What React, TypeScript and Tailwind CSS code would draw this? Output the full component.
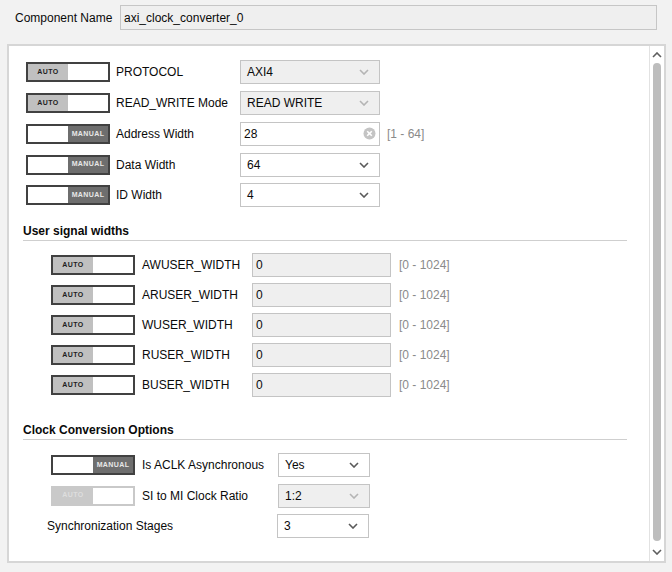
import React from 'react'

type Mode = 'auto' | 'manual' | 'disabled'

function Toggle({ mode }: { mode: Mode }) {
  if (mode === 'manual') {
    return (
      <div className="flex h-[20px] w-[84px] shrink-0 border-2 border-[#414141] bg-white">
        <div className="flex-1 bg-white" />
        <div className="flex w-[40px] items-center justify-center bg-[#6e6e6e] text-[7px] font-bold tracking-[0.4px] text-[#e8e8e8]">
          MANUAL
        </div>
      </div>
    )
  }
  const disabled = mode === 'disabled'
  return (
    <div
      className={
        disabled
          ? 'flex h-[20px] w-[84px] shrink-0 border-2 border-[#c9c9c9] bg-white'
          : 'flex h-[20px] w-[84px] shrink-0 border-2 border-[#414141] bg-white'
      }
    >
      <div
        className={
          disabled
            ? 'flex w-[40px] items-center justify-center bg-[#c9c9c9] text-[7px] font-bold tracking-[0.4px] text-[#dedede]'
            : 'flex w-[40px] items-center justify-center bg-[#c0c0c0] text-[7px] font-bold tracking-[0.4px] text-[#1e1e1e]'
        }
      >
        AUTO
      </div>
      <div className="flex-1 bg-white" />
    </div>
  )
}

function Chevron({ disabled }: { disabled?: boolean }) {
  return (
    <svg width="10" height="6" viewBox="0 0 10 6" className="shrink-0">
      <path d="M1 1 L5 5 L9 1" fill="none" stroke={disabled ? '#b4b4b4' : '#5a5a5a'} strokeWidth="1.6" />
    </svg>
  )
}

function Select({ value, width, disabled }: { value: string; width: string; disabled?: boolean }) {
  return (
    <div
      className={
        (disabled ? 'bg-[#efefef] ' : 'bg-white ') +
        width +
        ' flex h-[24px] shrink-0 items-center justify-between border border-[#c4c4c4] pl-[6px] pr-[10px]'
      }
    >
      <span>{value}</span>
      <Chevron disabled={disabled} />
    </div>
  )
}

function Range({ text }: { text: string }) {
  return <span className="text-[#8a8a8a]">{text}</span>
}

const userRows = ['AWUSER_WIDTH', 'ARUSER_WIDTH', 'WUSER_WIDTH', 'RUSER_WIDTH', 'BUSER_WIDTH']

export default function App() {
  return (
    <div
      className="h-[572px] w-[672px] overflow-hidden bg-[#f2f2f2] text-[12px] text-[#0a0a0a]"
      style={{ fontFamily: '"Liberation Sans", Arial, sans-serif' }}
    >
      {/* Component name */}
      <div className="flex items-center pl-[15px] pt-[5px]">
        <span className="w-[105px]">Component Name</span>
        <div className="flex h-[25px] w-[537px] items-center border border-[#c6c6c6] bg-[#efefef] pl-[3px]">
          axi_clock_converter_0
        </div>
      </div>

      {/* Settings panel */}
      <div className="ml-[7px] mt-[14px] flex h-[519px] w-[659px] border-2 border-[#d6d6d6] bg-white">
        <div className="flex-1 overflow-hidden">
          <div className="pl-[17px] pt-[11px]">
            <div className="flex h-[30.75px] items-center">
              <Toggle mode="auto" />
              <span className="ml-[6px] w-[124px]">PROTOCOL</span>
              <Select value="AXI4" width="w-[140px]" disabled />
            </div>
            <div className="flex h-[30.75px] items-center">
              <Toggle mode="auto" />
              <span className="ml-[6px] w-[124px]">READ_WRITE Mode</span>
              <Select value="READ WRITE" width="w-[140px]" disabled />
            </div>
            <div className="flex h-[30.75px] items-center">
              <Toggle mode="manual" />
              <span className="ml-[6px] w-[124px]">Address Width</span>
              <div className="flex h-[24px] w-[140px] items-center justify-between border border-[#c4c4c4] bg-white pl-[3px] pr-[3px]">
                <span>28</span>
                <svg width="13" height="13" viewBox="0 0 13 13">
                  <circle cx="6.5" cy="6.5" r="6" fill="#c4c4c4" />
                  <path d="M4.2 4.2 L8.8 8.8 M8.8 4.2 L4.2 8.8" stroke="#fff" strokeWidth="1.6" />
                </svg>
              </div>
              <span className="ml-[7px]">
                <Range text="[1 - 64]" />
              </span>
            </div>
            <div className="flex h-[30.75px] items-center">
              <Toggle mode="manual" />
              <span className="ml-[6px] w-[124px]">Data Width</span>
              <Select value="64" width="w-[140px]" />
            </div>
            <div className="flex h-[30.75px] items-center">
              <Toggle mode="manual" />
              <span className="ml-[6px] w-[124px]">ID Width</span>
              <Select value="4" width="w-[140px]" />
            </div>
          </div>

          {/* User signal widths */}
          <div className="ml-[14px] mr-[22px] mt-[13px] border-b border-[#cfcfcf] pb-[2px] font-bold leading-[14px]">
            User signal widths
          </div>
          <div className="pl-[42px] pt-[9px]">
            {userRows.map((name) => (
              <div key={name} className="flex h-[30px] items-center">
                <Toggle mode="auto" />
                <span className="ml-[7px] w-[110px]">{name}</span>
                <div className="flex h-[24px] w-[139px] items-center border border-[#c4c4c4] bg-[#efefef] pl-[3px]">0</div>
                <span className="ml-[8px]">
                  <Range text="[0 - 1024]" />
                </span>
              </div>
            ))}
          </div>

          {/* Clock conversion */}
          <div className="ml-[14px] mr-[22px] mt-[23px] border-b border-[#cfcfcf] pb-[2px] font-bold leading-[14px]">
            Clock Conversion Options
          </div>
          <div className="pl-[42px] pt-[10px]">
            <div className="flex h-[30.5px] items-center">
              <Toggle mode="manual" />
              <span className="ml-[7px] w-[136px]">Is ACLK Asynchronous</span>
              <Select value="Yes" width="w-[92px]" />
            </div>
            <div className="flex h-[30.5px] items-center">
              <Toggle mode="disabled" />
              <span className="ml-[7px] w-[136px]">SI to MI Clock Ratio</span>
              <Select value="1:2" width="w-[92px]" disabled />
            </div>
            <div className="-ml-[4px] flex h-[30.5px] items-center">
              <span className="w-[230px]">Synchronization Stages</span>
              <Select value="3" width="w-[92px]" />
            </div>
          </div>
        </div>

        {/* Scrollbar */}
        <div className="flex w-[15px] shrink-0 flex-col items-center border-l border-[#e2e2e2] bg-white">
          <svg width="10" height="6" viewBox="0 0 10 6" className="mt-[6px]">
            <path d="M1 5 L5 1 L9 5" fill="none" stroke="#5e5e5e" strokeWidth="1.6" />
          </svg>
          <div className="mt-[5px] w-[8px] flex-1 rounded-full bg-[#bdbdbd]" />
          <svg width="10" height="6" viewBox="0 0 10 6" className="mb-[6px] mt-[8px]">
            <path d="M1 1 L5 5 L9 1" fill="none" stroke="#5e5e5e" strokeWidth="1.6" />
          </svg>
        </div>
      </div>
    </div>
  )
}
